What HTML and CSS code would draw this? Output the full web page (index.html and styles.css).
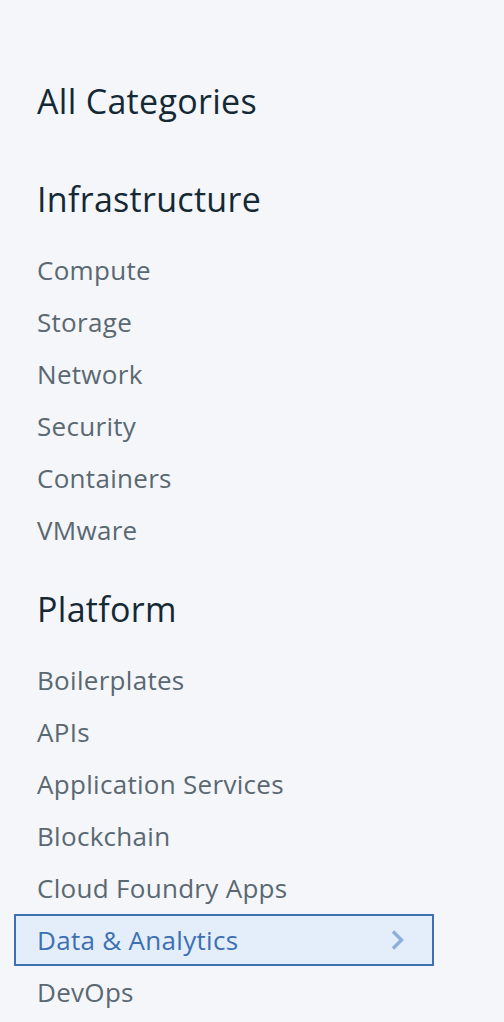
FILE: index.html
```html
<!DOCTYPE html>
<html lang="en">
<head>
<meta charset="utf-8">
<title>Categories</title>
<link rel="stylesheet" href="styles.css">
</head>
<body>
<nav class="sidebar">
  <h2 class="title">All Categories</h2>
  <section class="group group-first">
    <h3 class="group-title">Infrastructure</h3>
    <ul class="list">
      <li class="item">Compute</li>
      <li class="item">Storage</li>
      <li class="item">Network</li>
      <li class="item">Security</li>
      <li class="item">Containers</li>
      <li class="item">VMware</li>
    </ul>
  </section>
  <section class="group">
    <h3 class="group-title">Platform</h3>
    <ul class="list">
      <li class="item">Boilerplates</li>
      <li class="item">APIs</li>
      <li class="item">Application Services</li>
      <li class="item">Blockchain</li>
      <li class="item">Cloud Foundry Apps</li>
      <li class="item item-active"><span>Data &amp; Analytics</span>
        <svg class="chev" width="16" height="22" viewBox="0 0 16 22" aria-hidden="true"><path d="M3 2.5 L11.5 11 L3 19.5" fill="none" stroke="#8fb0dc" stroke-width="3.4"/></svg>
      </li>
      <li class="item">DevOps</li>
    </ul>
  </section>
</nav>
</body>
</html>
```
FILE: styles.css
```css
html, body {
  margin: 0;
  padding: 0;
  background: #f4f6fa;
}
body {
  font-family: "Open Sans", "Noto Sans", sans-serif;
  width: 504px;
  height: 1022px;
  overflow: hidden;
}
.sidebar {
  padding: 78px 0 0 14px;
  width: 420px;
}
.title,
.group-title {
  margin: 0 0 0 23px;
  height: 46px;
  line-height: 46px;
  font-size: 34px;
  font-weight: 400;
  color: #152935;
  letter-spacing: 0.3px;
}
.group-title {
  margin-top: 30px;
}
.group-first .group-title {
  margin-top: 52px;
}
.list {
  list-style: none;
  margin: 0;
  padding: 22px 0 0;
}
.item {
  box-sizing: border-box;
  height: 52px;
  padding: 0 21px;
  border: 2px solid transparent;
  display: flex;
  align-items: center;
  justify-content: space-between;
  font-size: 26px;
  letter-spacing: 0.3px;
  color: #5a6872;
}
.item-active {
  border-color: #3d70b2;
  background: #e4eefa;
  color: #3d70b2;
}
.chev {
  margin-right: 5px;
}
```
